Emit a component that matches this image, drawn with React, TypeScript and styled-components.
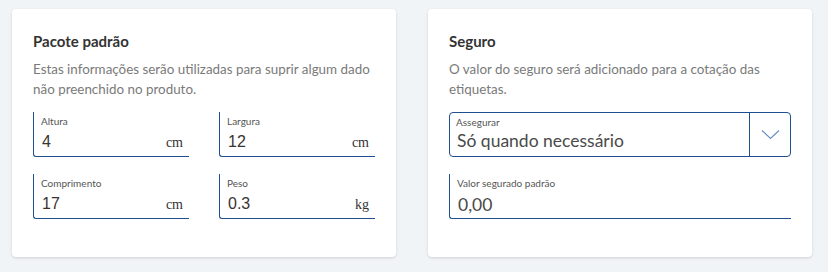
import styled, { createGlobalStyle } from "styled-components";

const GlobalStyle = createGlobalStyle`
  html, body {
    margin: 0;
    padding: 0;
    background: #f1f4f7;
    font-family: Lato, "Open Sans", sans-serif;
  }
`;

const blue = "#1d4f91";

const Page = styled.div`
  display: grid;
  grid-template-columns: 384px 384px;
  column-gap: 32px;
  padding: 9px 16px 15px 12px;
`;

const Card = styled.section`
  background: #fff;
  border-radius: 4px;
  box-shadow: 0 1px 3px rgba(0, 0, 0, 0.14);
  height: 248px;
  box-sizing: border-box;
  padding: 22px 21px 0 21px;
`;

const Title = styled.h2`
  margin: 0 0 9px;
  font-size: 15px;
  line-height: 20px;
  font-weight: 700;
  color: #333;
`;

const Description = styled.p`
  margin: 0 0 13px;
  font-size: 13.4px;
  line-height: 19.5px;
  color: #7a7a7a;
`;

const FieldGrid = styled.div`
  display: grid;
  grid-template-columns: 156px 156px;
  column-gap: 30px;
  row-gap: 17px;
`;

const FieldStack = styled.div`
  display: flex;
  flex-direction: column;
  gap: 17px;
`;

const Field = styled.div`
  height: 45px;
  box-sizing: border-box;
  border-left: 1.5px solid ${blue};
  border-bottom: 1.5px solid ${blue};
  border-bottom-left-radius: 3px;
  padding: 3px 6px 0 7px;
  display: flex;
  flex-direction: column;
`;

const Label = styled.span`
  font-size: 10px;
  line-height: 13px;
  color: #555;
`;

const ValueRow = styled.div`
  display: flex;
  align-items: baseline;
  justify-content: space-between;
  padding-left: 1px;
  margin-top: 3px;
`;

const NumberValue = styled.span`
  font-family: "Liberation Sans", Arial, sans-serif;
  font-size: 16px;
  line-height: 22px;
  color: #3a3330;
`;

const Unit = styled.span`
  font-family: "Liberation Serif", "Times New Roman", serif;
  font-size: 14px;
  color: #333;
`;

const TextValue = styled.span<{ $gap?: number }>`
  font-size: 17.5px;
  line-height: 24px;
  color: #4a4a4a;
  padding-left: 1px;
  margin-top: ${(p) => p.$gap ?? 0}px;
`;

const Select = styled.div`
  height: 45px;
  box-sizing: border-box;
  border: 1.5px solid ${blue};
  border-radius: 4px;
  display: flex;
`;

const SelectBody = styled.div`
  flex: 1;
  display: flex;
  flex-direction: column;
  padding: 3px 6px 0 6px;
`;

const SelectButton = styled.div`
  width: 40px;
  border-left: 1.5px solid ${blue};
  display: flex;
  align-items: center;
  justify-content: center;
`;

const Chevron = () => (
  <svg width="19" height="11" viewBox="0 0 19 11">
    <path d="M1 1.5 L9.5 9.5 L18 1.5" fill="none" stroke="#6a8fc6" strokeWidth="1.2" />
  </svg>
);

const dims = [
  { label: "Altura", value: "4", unit: "cm" },
  { label: "Largura", value: "12", unit: "cm" },
  { label: "Comprimento", value: "17", unit: "cm" },
  { label: "Peso", value: "0.3", unit: "kg" },
];

export default function App() {
  return (
    <>
      <GlobalStyle />
      <Page>
        <Card>
          <Title>Pacote padrão</Title>
          <Description>
            Estas informações serão utilizadas para suprir algum dado não preenchido no produto.
          </Description>
          <FieldGrid>
            {dims.map((d) => (
              <Field key={d.label}>
                <Label>{d.label}</Label>
                <ValueRow>
                  <NumberValue>{d.value}</NumberValue>
                  <Unit>{d.unit}</Unit>
                </ValueRow>
              </Field>
            ))}
          </FieldGrid>
        </Card>
        <Card>
          <Title>Seguro</Title>
          <Description>O valor do seguro será adicionado para a cotação das etiquetas.</Description>
          <FieldStack>
            <Select>
              <SelectBody>
                <Label>Assegurar</Label>
                <TextValue>Só quando necessário</TextValue>
              </SelectBody>
              <SelectButton>
                <Chevron />
              </SelectButton>
            </Select>
            <Field>
              <Label>Valor segurado padrão</Label>
              <TextValue $gap={3}>0,00</TextValue>
            </Field>
          </FieldStack>
        </Card>
      </Page>
    </>
  );
}
